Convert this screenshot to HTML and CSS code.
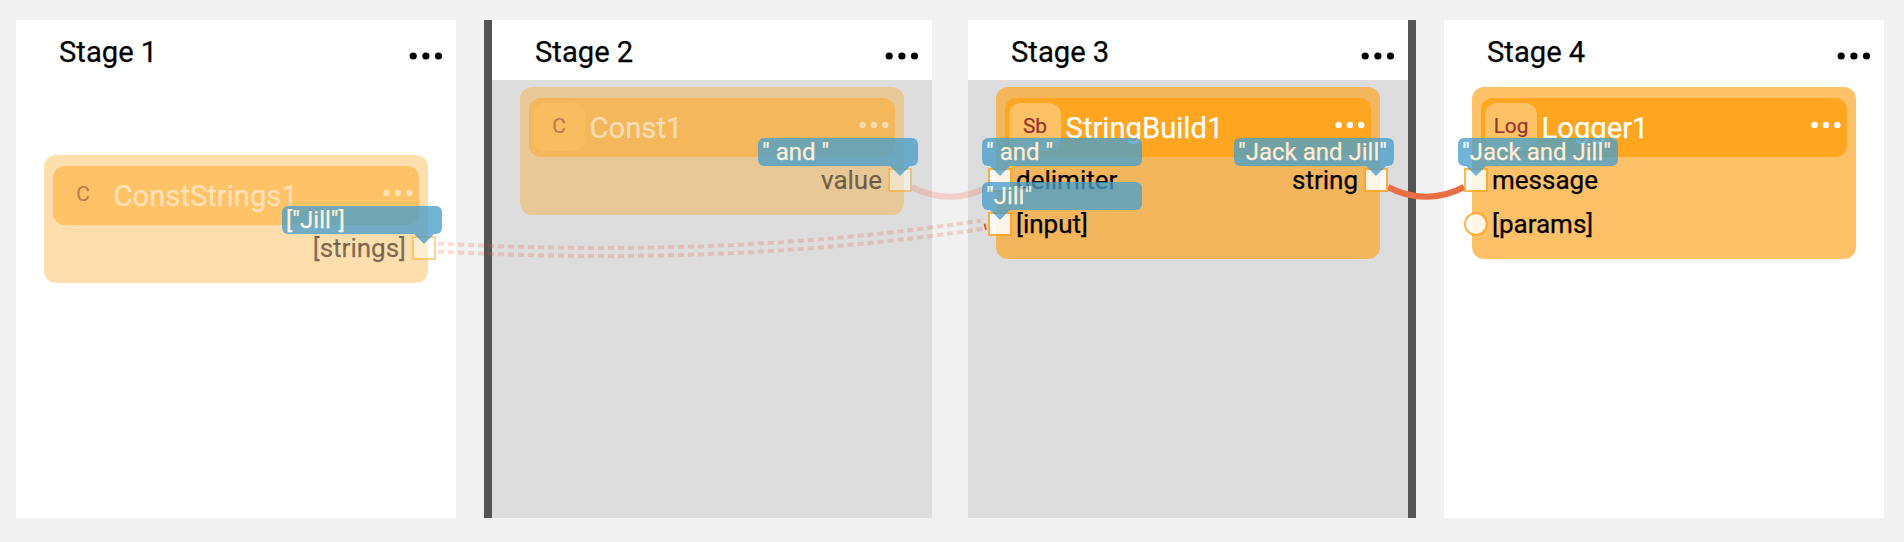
FILE: index.html
```html
<!DOCTYPE html>
<html lang="en">
<head>
<meta charset="utf-8">
<title>Stages</title>
<link rel="stylesheet" href="styles.css">
</head>
<body>
<main class="board">
  <svg class="wires" width="1904" height="542" viewBox="0 0 1904 542">
    <g class="wire-list">
      <path d="M438 243.4Q725 259.3 981 220.6"/>
      <path d="M438 251.4Q725 267.3 983 228.8"/>
    </g>
    <path class="wire-end" d="M984.5 223.8L986 229.8"/>
    <path class="wire wire-muted" d="M912 187C936 200 964 200 988 187"/>
    <path class="wire" d="M1388 187C1412 200 1440 200 1464 187"/>
  </svg>

  <section class="stage">
    <header class="stage-head"><h2 class="stage-title">Stage 1</h2>
      <svg class="dots" width="34" height="8" viewBox="0 0 34 8"><circle cx="4.2" cy="4" r="3.6"/><circle cx="16.9" cy="4" r="3.6"/><circle cx="29.5" cy="4" r="3.6"/></svg>
    </header>
    <div class="canvas">
      <article class="node short low muted">
        <div class="node-head"><span class="badge">C</span><span class="name">ConstStrings1</span>
          <svg class="node-dots" width="30" height="8" viewBox="0 0 30 8"><circle cx="3.6" cy="4" r="3.2"/><circle cx="14.9" cy="4" r="3.2"/><circle cx="26.3" cy="4" r="3.2"/></svg>
        </div>
        <div class="port out"><span class="label">[strings]</span><i class="pin"></i><div class="tip">["Jill"]</div></div>
      </article>
    </div>
  </section>

  <section class="stage active first">
    <header class="stage-head"><h2 class="stage-title">Stage 2</h2>
      <svg class="dots" width="34" height="8" viewBox="0 0 34 8"><circle cx="4.2" cy="4" r="3.6"/><circle cx="16.9" cy="4" r="3.6"/><circle cx="29.5" cy="4" r="3.6"/></svg>
    </header>
    <div class="canvas">
      <article class="node short muted">
        <div class="node-head"><span class="badge">C</span><span class="name">Const1</span>
          <svg class="node-dots" width="30" height="8" viewBox="0 0 30 8"><circle cx="3.6" cy="4" r="3.2"/><circle cx="14.9" cy="4" r="3.2"/><circle cx="26.3" cy="4" r="3.2"/></svg>
        </div>
        <div class="port out"><span class="label">value</span><i class="pin"></i><div class="tip">" and "</div></div>
      </article>
    </div>
  </section>

  <section class="stage active last">
    <header class="stage-head"><h2 class="stage-title">Stage 3</h2>
      <svg class="dots" width="34" height="8" viewBox="0 0 34 8"><circle cx="4.2" cy="4" r="3.6"/><circle cx="16.9" cy="4" r="3.6"/><circle cx="29.5" cy="4" r="3.6"/></svg>
    </header>
    <div class="canvas">
      <article class="node">
        <div class="node-head"><span class="badge">Sb</span><span class="name">StringBuild1</span>
          <svg class="node-dots" width="30" height="8" viewBox="0 0 30 8"><circle cx="3.6" cy="4" r="3.2"/><circle cx="14.9" cy="4" r="3.2"/><circle cx="26.3" cy="4" r="3.2"/></svg>
        </div>
        <div class="port in"><i class="pin"></i><span class="label">delimiter</span><div class="tip">" and "</div></div>
        <div class="port in second"><i class="pin"></i><span class="label">[input]</span><div class="tip">"Jill"</div></div>
        <div class="port out"><span class="label">string</span><i class="pin"></i><div class="tip">"Jack and Jill"</div></div>
      </article>
    </div>
  </section>

  <section class="stage">
    <header class="stage-head"><h2 class="stage-title">Stage 4</h2>
      <svg class="dots" width="34" height="8" viewBox="0 0 34 8"><circle cx="4.2" cy="4" r="3.6"/><circle cx="16.9" cy="4" r="3.6"/><circle cx="29.5" cy="4" r="3.6"/></svg>
    </header>
    <div class="canvas">
      <article class="node">
        <div class="node-head"><span class="badge">Log</span><span class="name">Logger1</span>
          <svg class="node-dots" width="30" height="8" viewBox="0 0 30 8"><circle cx="3.6" cy="4" r="3.2"/><circle cx="14.9" cy="4" r="3.2"/><circle cx="26.3" cy="4" r="3.2"/></svg>
        </div>
        <div class="port in"><i class="pin"></i><span class="label">message</span><div class="tip">"Jack and Jill"</div></div>
        <div class="port in second"><i class="pin round"></i><span class="label">[params]</span></div>
      </article>
    </div>
  </section>
</main>
</body>
</html>
```
FILE: styles.css
```css
* { box-sizing: border-box; }

body {
  margin: 0;
  background: #f1f1f1;
  font-family: Roboto, "Liberation Sans", sans-serif;
  color: #000;
}

.board {
  position: relative;
  display: flex;
  gap: 36px;
  width: 1904px;
  height: 542px;
  padding: 20px 20px 24px 16px;
  overflow: hidden;
}

/* Wires run over the stage backgrounds and under the nodes */
.wires {
  position: absolute;
  inset: 0;
  z-index: 1;
  fill: none;
}
.wire { stroke: #e86e43; stroke-width: 6; }
.wire-muted { stroke: rgba(248, 80, 45, .2); }
.wire-list { stroke: rgba(240, 85, 60, .22); stroke-width: 4; stroke-dasharray: 6 4; }
.wire-end { stroke: #ee4b25; stroke-width: 1.8; }

.stage {
  display: flex;
  flex-direction: column;
  width: 440px;
  background: #fff;
}
.stage.first { box-shadow: -8px 0 #545454; }
.stage.last { box-shadow: 8px 0 #545454; }

.stage-head {
  display: flex;
  justify-content: space-between;
  height: 60px;
  padding: 0 13px 0 43px;
}
.stage-title {
  margin: 0;
  font-size: 29.2px;
  font-weight: 400;
  line-height: 64px;
  -webkit-text-stroke: .25px;
}
.dots { margin-top: 32px; fill: #000; }

.canvas { position: relative; flex: 1; }
.active .canvas { background: #ddd; }

.node {
  position: absolute;
  left: 28px;
  top: 7.33px;
  z-index: 2;
  width: 384px;
  height: 172px;
  padding: 11px 9px;
  border-radius: 12px;
  background: rgba(255, 163, 28, .67);
}
.node.short { height: 128px; }
.node.low { top: 75.33px; }

.node-head {
  display: flex;
  height: 59px;
  padding: 5px 6px 0 4px;
  border-radius: 12px;
  background: #ffa520;
}
.badge {
  width: 52px;
  height: 48px;
  border-radius: 12px;
  background: #ffc166;
  color: #993333;
  font-size: 20.8px;
  line-height: 46px;
  text-align: center;
  -webkit-text-stroke: .2px;
}
.name {
  flex: 1;
  margin-left: 4.6px;
  color: #fff;
  font-size: 29.2px;
  line-height: 51px;
  -webkit-text-stroke: .25px;
}
.node-dots { margin-top: 18px; fill: #fff; }

/* Port rows are pinned to the node's edges */
.port {
  position: absolute;
  top: 81px;
  display: flex;
  align-items: center;
  gap: 4px;
  height: 24px;
  font-size: 26px;
  line-height: 24px;
}
.label { -webkit-text-stroke: .25px; }
.port.second { top: 125px; }
.port.in { left: -8px; }
.port.out { right: -8px; gap: 6px; }
.pin {
  width: 24px;
  height: 24px;
  border: 2px solid rgba(255, 165, 32, .8);
  background: rgba(255, 255, 255, .85);
  background-clip: padding-box;
}
.pin.round { border-radius: 50%; }

.tip {
  position: absolute;
  top: -30px;
  z-index: 1;
  width: 160px;
  height: 28px;
  padding-left: 4px;
  border-radius: 6px;
  background: #4a9fcb;
  color: #fff;
  font-size: 24px;
  line-height: 28px;
  opacity: .78;
  white-space: nowrap;
  -webkit-text-stroke: .25px;
}
.in .tip { left: -6px; }
.out .tip { right: -6px; }
.tip::after {
  content: "";
  position: absolute;
  top: 28px;
  border: 10px solid transparent;
  border-top-color: #4a9fcb;
  border-bottom: 0;
}
.in .tip::after { left: 8px; }
.out .tip::after { right: 8px; }

.muted { background: rgba(255, 163, 28, .355); }
.muted .node-head { background: rgba(255, 165, 32, .5); }
.muted .badge { background: rgba(255, 193, 102, .5); color: rgba(153, 51, 51, .5); }
.muted .name { color: rgba(255, 255, 255, .5); }
.muted .node-dots { fill: rgba(255, 255, 255, .5); }
.muted .label { color: rgba(0, 0, 0, .5); }
.muted .pin { border-color: rgba(255, 165, 32, .5); background-color: rgba(255, 255, 255, .45); }
```
